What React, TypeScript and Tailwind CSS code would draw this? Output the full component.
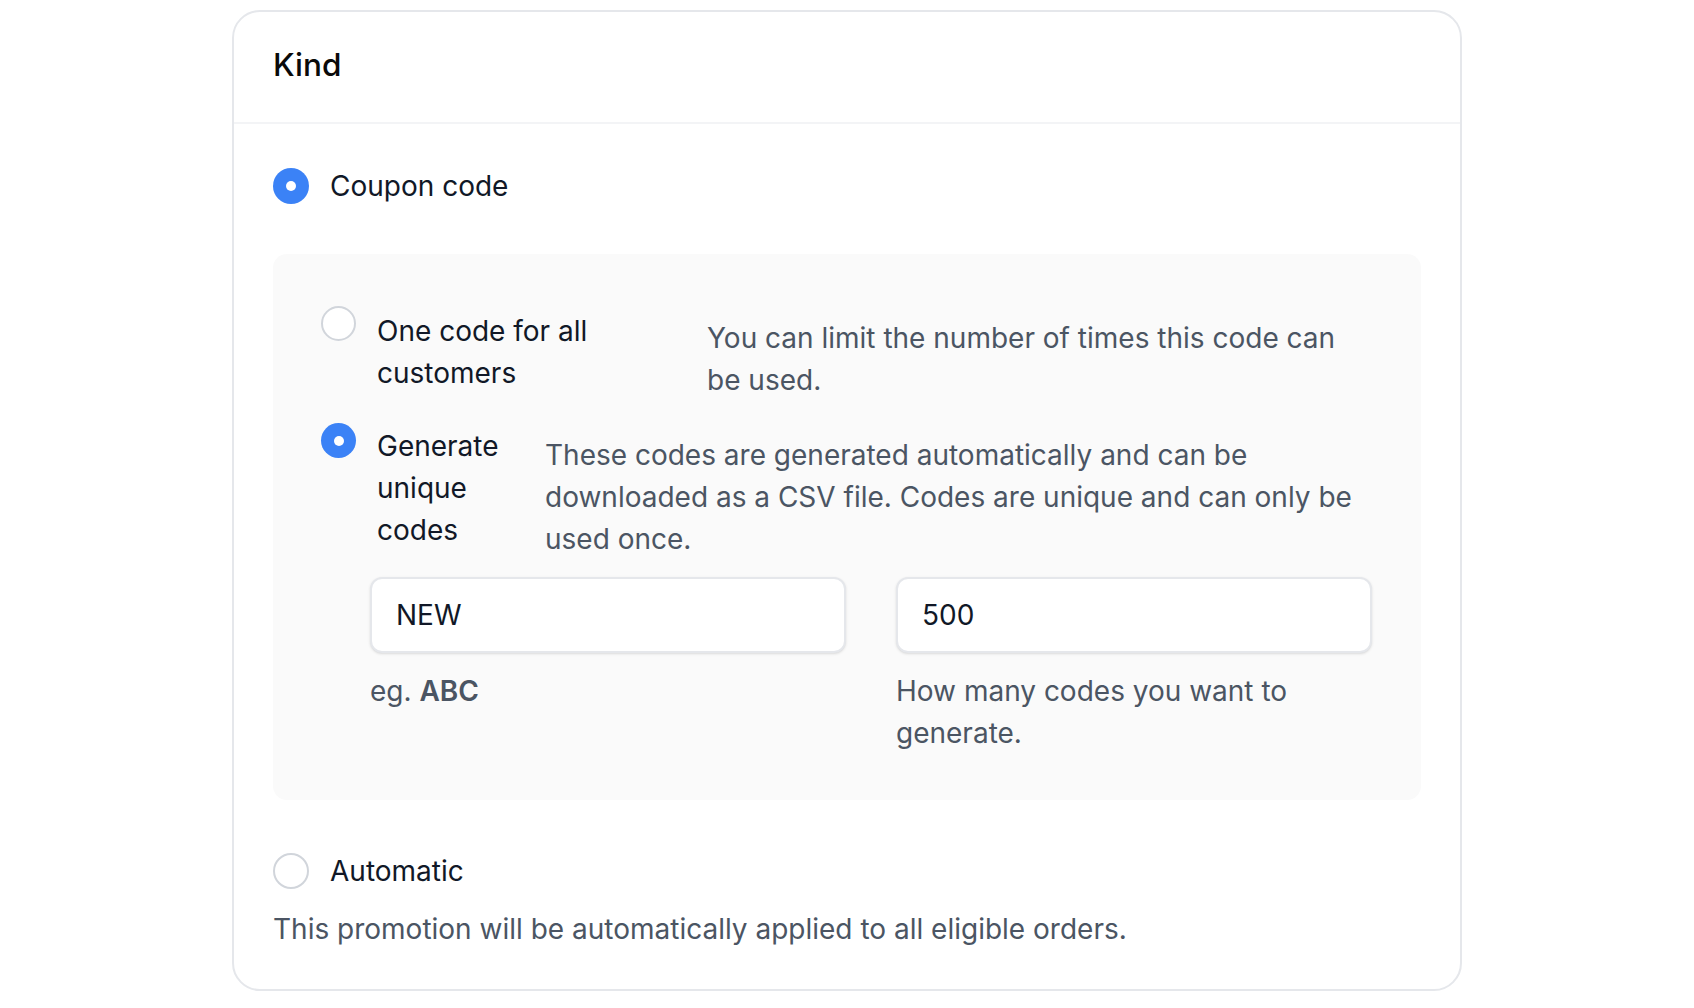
import React from "react";

function Radio({ checked, size }: { checked: boolean; size: "lg" | "md" }) {
  const dim = size === "lg" ? "w-[36px] h-[36px]" : "w-[35px] h-[35px] mt-[1px]";
  if (checked) {
    return (
      <span className={`${dim} shrink-0 rounded-full bg-[#3b82f6] flex items-center justify-center`}>
        <span className="w-[10px] h-[10px] rounded-full bg-white" />
      </span>
    );
  }
  return <span className={`${dim} shrink-0 rounded-full border-2 border-[#d1d5db] bg-white`} />;
}

export default function App() {
  return (
    <div className="min-h-screen bg-white pt-[10px] font-['Inter',sans-serif] text-[28px] leading-[42px]">
      <div className="mx-auto w-[1230px] rounded-[28px] border-2 border-[#e5e7eb] bg-white">
        <div className="h-[112px] flex items-center px-[39px] pb-[4px] border-b-2 border-[#f3f4f6]">
          <h2 className="text-[31.5px] font-medium text-[#0a0a0a]">Kind</h2>
        </div>

        <div className="px-[39px] pt-[41px] pb-[39px]">
          <div className="flex items-center gap-[21px]">
            <Radio checked size="lg" />
            <span className="text-[#111827]">Coupon code</span>
          </div>

          <div className="mt-[47px] rounded-[14px] bg-[#fafafa] pt-[51px] pb-[46px] pl-[48px] pr-[47px]">
            <div className="flex items-start">
              <Radio checked={false} size="md" />
              <div className="ml-[21px] mt-[5px] w-[302px] mr-[28px] text-[#111827]">
                One code for all customers
              </div>
              <div className="mt-[12px] w-[650px] text-[#4b5563]">
                You can limit the number of times this code can be used.
              </div>
            </div>

            <div className="mt-[21px] flex items-start">
              <Radio checked size="md" />
              <div className="ml-[21px] mt-[3px] w-[140px] mr-[28px] text-[#111827]">
                Generate unique codes
              </div>
              <div className="mt-[12px] flex-1 text-[#4b5563]">
                These codes are generated automatically and can be downloaded as a CSV file. Codes are unique and can only be used once.
              </div>
            </div>

            <div className="mt-[17px] ml-[49px] w-[1002px] grid grid-cols-2 gap-x-[50px]">
              <div>
                <input
                  readOnly
                  value="NEW"
                  className="w-full h-[76px] rounded-[12px] border-2 border-[#e5e7eb] bg-white px-[24px] text-[28px] text-[#111827] shadow-sm outline-none"
                />
                <p className="mt-[17px] text-[#4b5563]">
                  eg. <span className="font-semibold">ABC</span>
                </p>
              </div>
              <div>
                <input
                  readOnly
                  value="500"
                  className="w-full h-[76px] rounded-[12px] border-2 border-[#e5e7eb] bg-white px-[24px] text-[28px] text-[#111827] shadow-sm outline-none"
                />
                <p className="mt-[17px] text-[#4b5563]">How many codes you want to generate.</p>
              </div>
            </div>
          </div>

          <div className="mt-[50px] flex items-center gap-[21px]">
            <Radio checked={false} size="lg" />
            <span className="text-[#111827]">Automatic</span>
          </div>
          <p className="mt-[16px] text-[#4b5563]">
            This promotion will be automatically applied to all eligible orders.
          </p>
        </div>
      </div>
    </div>
  );
}
